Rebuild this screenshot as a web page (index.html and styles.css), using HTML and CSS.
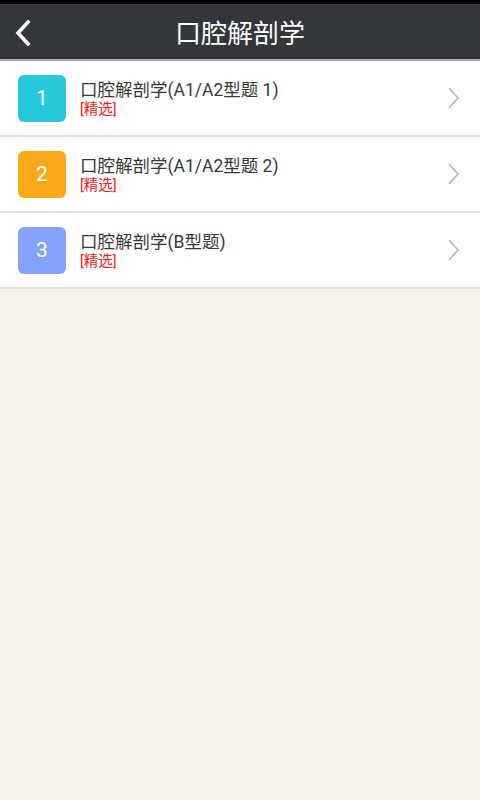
FILE: index.html
```html
<!DOCTYPE html>
<html>

<head>
    <meta charset="utf-8">
    <link rel="stylesheet" href="styles.css">
    <title>口腔解剖学</title>
</head>

<body>
    <div class="statusbar"></div>
    <div class="header">
        <a class="back" href="#">
            <svg width="18" height="26" viewBox="0 0 18 26">
                <polyline points="14,2 4,13 14,24" fill="none" stroke="#ffffff" stroke-width="3.6" stroke-linecap="square" />
            </svg>
        </a>
        <h1>口腔解剖学</h1>
    </div>

    <ul class="list">
        <li class="item">
            <div class="num num-cyan">1</div>
            <div class="info">
                <div class="name">口腔解剖学(A1/A2型题 1)</div>
                <div class="tag">[精选]</div>
            </div>
            <svg class="arrow" width="12" height="22" viewBox="0 0 12 22">
                <polyline points="1,1 10,11 1,21" fill="none" stroke="#b4b4b4" stroke-width="1.6" />
            </svg>
        </li>
        <li class="item">
            <div class="num num-orange">2</div>
            <div class="info">
                <div class="name">口腔解剖学(A1/A2型题 2)</div>
                <div class="tag">[精选]</div>
            </div>
            <svg class="arrow" width="12" height="22" viewBox="0 0 12 22">
                <polyline points="1,1 10,11 1,21" fill="none" stroke="#b4b4b4" stroke-width="1.6" />
            </svg>
        </li>
        <li class="item">
            <div class="num num-blue">3</div>
            <div class="info">
                <div class="name">口腔解剖学(B型题)</div>
                <div class="tag">[精选]</div>
            </div>
            <svg class="arrow" width="12" height="22" viewBox="0 0 12 22">
                <polyline points="1,1 10,11 1,21" fill="none" stroke="#b4b4b4" stroke-width="1.6" />
            </svg>
        </li>
    </ul>
</body>

</html>
```

FILE: styles.css
```css
html, body {
    margin: 0;
    padding: 0;
    height: 100%;
}

body {
    background: #f6f3ec;
    font-family: Roboto, "Noto Sans CJK SC", sans-serif;
}

.statusbar {
    height: 4px;
    background: #000000;
}

.header {
    height: 55px;
    background: #33373a;
    border-bottom: 2px solid #a8a9a9;
    display: flex;
    align-items: center;
    justify-content: center;
    position: relative;
}

.header h1 {
    margin: 0;
    color: #ffffff;
    font-size: 26px;
    font-weight: normal;
}

.back {
    position: absolute;
    left: 14px;
    top: 16px;
    display: flex;
}

.list {
    list-style: none;
    margin: 0;
    padding: 0;
    background: #ffffff;
}

.item {
    height: 74px;
    border-bottom: 2px solid #e2e2e2;
    display: flex;
    align-items: center;
    padding: 0 18px;
}

.num {
    width: 48px;
    height: 47px;
    border-radius: 6px;
    color: #ffffff;
    font-size: 21px;
    display: flex;
    align-items: center;
    justify-content: center;
    flex-shrink: 0;
}

.num-cyan {
    background: #27c8da;
}

.num-orange {
    background: #f9a817;
}

.num-blue {
    background: #86a3fb;
}

.info {
    flex: 1;
    margin-left: 14px;
    margin-top: 2px;
}

.name {
    font-size: 17.5px;
    color: #383838;
    line-height: 20px;
}

.tag {
    font-size: 14.5px;
    color: #ff1a1a;
    line-height: 18px;
    margin-top: 1px;
}

.arrow {
    margin-right: 2px;
    margin-top: 0;
}
```
